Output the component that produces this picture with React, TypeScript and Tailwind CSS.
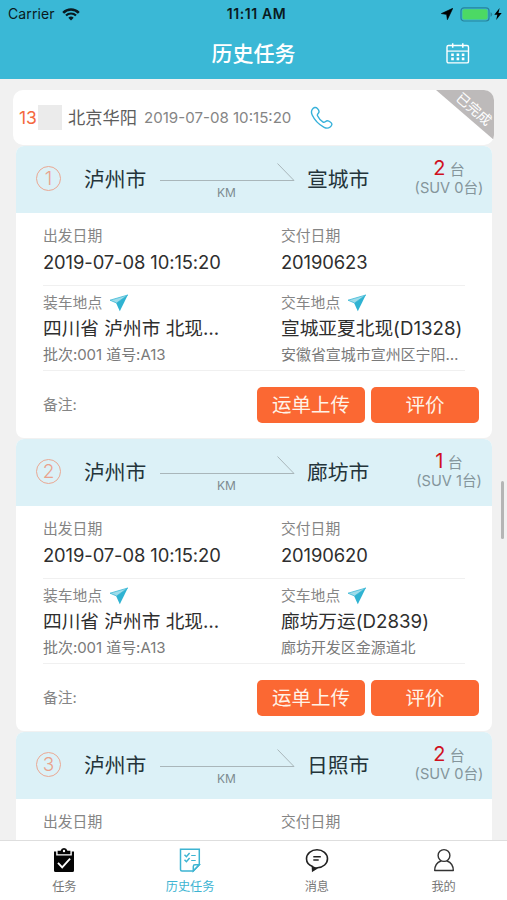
interface Stop {
  index: string;
  from: string;
  to: string;
  count: number;
  suv: number;
  departDate: string;
  deliverDate: string;
  load?: { title: string; detail: string };
  deliver?: { title: string; detail: string };
}

const stops: Stop[] = [
  {
    index: "1",
    from: "泸州市",
    to: "宣城市",
    count: 2,
    suv: 0,
    departDate: "2019-07-08 10:15:20",
    deliverDate: "20190623",
    load: { title: "四川省 泸州市 北现…", detail: "批次:001 道号:A13" },
    deliver: { title: "宣城亚夏北现(D1328)", detail: "安徽省宣城市宣州区宁阳…" },
  },
  {
    index: "2",
    from: "泸州市",
    to: "廊坊市",
    count: 1,
    suv: 1,
    departDate: "2019-07-08 10:15:20",
    deliverDate: "20190620",
    load: { title: "四川省 泸州市 北现…", detail: "批次:001 道号:A13" },
    deliver: { title: "廊坊万运(D2839)", detail: "廊坊开发区金源道北" },
  },
  {
    index: "3",
    from: "泸州市",
    to: "日照市",
    count: 2,
    suv: 0,
    departDate: "",
    deliverDate: "",
  },
];

function StatusBar() {
  return (
    <div className="grid h-[28px] grid-cols-3 items-center pl-2 pr-[5px] text-[#0a1a20]">
      <div className="flex items-center gap-[7px]">
        <span className="text-[14px] leading-[28px] tracking-[0.1px]">Carrier</span>
        <svg width="18" height="13" viewBox="0 0 18 13" fill="none" stroke="currentColor">
          <path d="M1.2 4.8a11 11 0 0 1 15.6 0" strokeWidth="2.6" />
          <path d="M4 7.6a7 7 0 0 1 10 0" strokeWidth="2.2" />
          <path d="M9 12.4 6.3 9.8a3.9 3.9 0 0 1 5.4 0z" fill="currentColor" stroke="none" />
        </svg>
      </div>
      <span className="pl-[3px] text-center text-[14px] font-semibold leading-[28px] tracking-[0.6px]">11:11 AM</span>
      <div className="flex items-center justify-end">
        <svg width="12" height="12" viewBox="0 0 12 12" className="mr-[7px] text-black" fill="currentColor">
          <path d="M11.8.3.3 5.6l5.3.8.8 5.3z" stroke="currentColor" strokeWidth=".6" />
        </svg>
        <svg width="33" height="15" viewBox="0 0 33 15">
          <rect x="1" y=".8" width="28" height="13.2" rx="3" fill="none" stroke="#27839b" strokeWidth="1.2" />
          <rect x="2.4" y="2.2" width="25.2" height="10.4" rx="1.8" fill="#4cd964" />
          <path d="M30.5 5.2a2.4 2.4 0 0 1 0 4.6z" fill="#27839b" />
        </svg>
        <svg width="8" height="12" viewBox="0 0 8 12" className="ml-px text-black" fill="currentColor">
          <path d="M5.6 0 .3 6.7h3L2.2 12l5.5-6.9H4.5z" />
        </svg>
      </div>
    </div>
  );
}

function CalendarIcon() {
  return (
    <svg width="24" height="22" viewBox="0 0 24 22" fill="none" stroke="white">
      <rect x="1" y="2.5" width="21.5" height="17.4" rx="1.5" strokeWidth="1.4" />
      <path d="M1 8.1h21.5" strokeWidth="1.2" />
      <path d="M6.7.3v4.4M16.8.3v4.4" strokeWidth="1.5" />
      <path d="M5.2 11.8h2.6m2.8 0h2.6m2.6 0h2.6M5.2 15.9h2.6m2.8 0h2.6m2.6 0h2.6" strokeWidth="2.6" />
    </svg>
  );
}

function PlaneIcon() {
  return (
    <svg width="20" height="18" viewBox="0 0 20 18">
      <path d="M1 6.2 18.8 1 7.6 9z" fill="#9edcea" stroke="#3bb8d6" strokeWidth=".8" strokeLinejoin="round" />
      <path d="M18.8 1 7.2 9.2l3.6 8z" fill="#2fb3d2" />
    </svg>
  );
}

function Place({ label, title, detail }: { label: string; title: string; detail: string }) {
  return (
    <div>
      <div className="flex h-[28px] items-center gap-[7px] pt-[5px]">
        <span className="text-[14.8px] leading-5 text-[#858585]">{label}</span>
        <PlaneIcon />
      </div>
      <p className="whitespace-nowrap text-[18.7px] leading-[29px] text-[#2e2e2e]">{title}</p>
      <p className="whitespace-nowrap text-[15px] leading-[23px] tracking-[-0.05px] text-[#7a7a7a]">{detail}</p>
    </div>
  );
}

function DateField({ label, value }: { label: string; value: string }) {
  return (
    <div className="pt-[13px]">
      <p className="text-[14.8px] leading-5 text-[#858585]">{label}</p>
      <p className="mt-[2px] whitespace-nowrap text-[18.4px] leading-7 tracking-[-0.1px] text-[#2e2e2e]">{value}</p>
    </div>
  );
}

function StopCard({ stop }: { stop: Stop }) {
  return (
    <section className="mb-px h-[292px] shrink-0 overflow-hidden rounded-lg bg-white">
      <div className="flex h-[67px] bg-[#dcf1f7]">
        <div className="mt-[20px] ml-5 flex size-[25px] items-center justify-center rounded-full border border-[#eaa893] text-[19px] font-light leading-none text-[#e9a28c]">
          {stop.index}
        </div>
        <span className="ml-[23px] w-[76px] text-[20.8px] leading-[67px] text-[#24343a]">{stop.from}</span>
        <div className="mt-[17px] w-[136px]">
          <svg width="136" height="19" viewBox="0 0 136 19" fill="none" stroke="#a9b6ba">
            <path d="M0 17.5h134L117.5.5" />
          </svg>
          <p className="pr-[3px] text-center text-[12px] leading-[22px] text-[#7d8b90]">KM</p>
        </div>
        <span className="ml-[11px] text-[20.8px] leading-[67px] text-[#24343a]">{stop.to}</span>
        <div className="mt-[9px] ml-auto flex w-[86px] flex-col items-center whitespace-nowrap text-[#84959b]">
          <p className="h-[23px] text-[15px] leading-[26px]">
            <span className="text-[20px] text-[#d0111f]">{stop.count}</span> 台
          </p>
          <p className="text-[14.6px] leading-5">(SUV {stop.suv}台)</p>
        </div>
      </div>

      <div className="mx-[27px]">
        <div className="grid h-[73px] grid-cols-[238px_1fr] border-b border-[#f0f0f0]">
          <DateField label="出发日期" value={stop.departDate} />
          <DateField label="交付日期" value={stop.deliverDate} />
        </div>
        {stop.load && stop.deliver && (
          <div className="grid h-[85px] grid-cols-[238px_1fr] border-b border-[#f0f0f0]">
            <Place label="装车地点" {...stop.load} />
            <Place label="交车地点" {...stop.deliver} />
          </div>
        )}
      </div>

      {stop.load && (
        <div className="flex items-center gap-[6px] pt-4 pl-[27px] pr-[13px]">
          <span className="flex-1 pt-px text-[14.8px] leading-[35px] text-[#858585]">备注:</span>
          <button className="h-9 w-[108px] rounded-[5px] bg-[#fb6833] text-[19.5px] leading-9 text-[#fff3e8]">运单上传</button>
          <button className="h-9 w-[108px] rounded-[5px] bg-[#fb6833] text-[19.5px] leading-9 text-[#fff3e8]">评价</button>
        </div>
      )}
    </section>
  );
}

function OrderHeader() {
  return (
    <div className="relative mx-[13px] mt-[11px] flex h-[55px] shrink-0 items-center overflow-hidden rounded-[10px] bg-white pl-[6px]">
      <span className="w-[19px] text-[17.5px] leading-6 text-[#f4693f]">13</span>
      <span className="h-[25px] w-[24px] bg-[#ebebeb]" />
      <span className="ml-[6px] w-[76px] whitespace-nowrap text-[17.3px] leading-6 text-[#5d5d5d]">北京华阳</span>
      <span className="w-[148px] whitespace-nowrap text-[15.1px] leading-6 text-[#858585]">2019-07-08 10:15:20</span>
      <svg width="24" height="24" viewBox="0 0 24 24" className="ml-[18px]" fill="none" stroke="#37b1da" strokeWidth="1.4" strokeLinejoin="round">
        <path d="M2.3 3.3C3.6 1.4 5.8.8 7.2 2.2c1.9 1.8 2.4 3.5 1.1 5-.9 1-1.3 1.5-.8 2.6 1.2 2.6 3.2 4.8 5.6 6.3.9.6 1.6.1 2.5-.7 1.4-1.2 3.1-.7 5 .8 1.9 1.4 1.6 3.2-.4 4.8-1.6 1.3-3.7 1.6-6.1.3C8.8 18.5 4.6 14.2 2.2 9 1.2 6.8 1.2 4.9 2.3 3.3z" />
      </svg>
      <div className="absolute top-0 right-0 h-[50px] w-[58px] bg-[#bdbaba] [clip-path:polygon(0_0,100%_0,100%_100%)]">
        <span className="absolute top-[9px] left-[17px] w-[42px] rotate-[41deg] text-center text-[13.8px] leading-5 text-white">
          已完成
        </span>
      </div>
    </div>
  );
}

function TabBar() {
  return (
    <nav className="grid h-[60px] shrink-0 grid-cols-4 border-t border-[#dedede] bg-white text-[12.2px] text-[#777]">
      <div className="flex flex-col items-center pt-[6px] pl-[2px]">
        <svg width="22" height="26" viewBox="0 0 22 26">
          <path d="M1 4.6h2.2v4h15.6v-4H21v18.9q0 1.5-1.5 1.5h-17Q1 25 1 23.5z" fill="#050505" />
          <path d="M4.6 7.3V3.7h3a3.5 3.5 0 0 1 6.8 0h3v3.6z" fill="#050505" />
          <circle cx="11" cy="4" r="1.2" fill="#fff" />
          <path d="m5 15.8 4.2 4.6 7.9-8.7" fill="none" stroke="#fff" strokeWidth="1.9" />
        </svg>
        <span className="mt-[5px] leading-[18px]">任务</span>
      </div>
      <div className="flex flex-col items-center pt-[6px] text-[#3db4d2]">
        <svg width="22" height="26" viewBox="0 0 22 26" fill="none" stroke="currentColor" strokeWidth="1.5">
          <path d="M1.5 2.3h18.8v15.5l-6 6.2H3q-1.5 0-1.5-1.5z" />
          <path d="M14.3 24v-4.5q0-1.7 1.7-1.7h4.3z" />
          <path d="m5.5 7.8 1.9 1.9 3.2-3.7M5.5 12.8l1.9 1.9 3.2-3.7" />
          <path d="M12.2 8.5h4.5M12.2 13.5h4.5" strokeWidth="1.2" />
        </svg>
        <span className="mt-[5px] leading-[18px]">历史任务</span>
      </div>
      <div className="flex flex-col items-center pt-[6px]">
        <svg width="24" height="26" viewBox="0 0 24 26" fill="none" stroke="#222" strokeWidth="1.6">
          <path d="M7.6 19.5C3.8 18.1 1.5 15.2 1.5 11.8 1.5 6.7 6.2 2.8 12 2.8s10.5 3.9 10.5 9c0 4.9-4.4 8.6-10 9l-4.7 2.7z" strokeLinejoin="round" />
          <path d="m7.6 20 .1 3.6 3-2.6z" fill="#222" />
          <path d="M8.3 9.8h7.5M8.3 13h5.4" strokeWidth="1.5" />
        </svg>
        <span className="mt-[5px] leading-[18px]">消息</span>
      </div>
      <div className="flex flex-col items-center pt-[6px]">
        <svg width="22" height="26" viewBox="0 0 22 26" fill="none" stroke="#333" strokeWidth="1.4">
          <circle cx="11" cy="8.5" r="5.9" />
          <path d="M8 14C4 15.5 1.7 18.8 1.7 23.5h18.6c0-4.7-2.3-8-6.3-9.5" strokeLinejoin="round" />
        </svg>
        <span className="mt-[5px] leading-[18px]">我的</span>
      </div>
    </nav>
  );
}

export default function App() {
  return (
    <div className="relative flex h-[900px] w-[507px] flex-col overflow-hidden bg-[#f1f1f1] font-['Inter','Noto_Sans_CJK_SC',sans-serif]">
      <header className="h-[79px] shrink-0 bg-[#3ab8d6]">
        <StatusBar />
        <div className="grid h-[51px] grid-cols-[1fr_auto_1fr] items-center pr-[37px]">
          <span />
          <h1 className="pl-[37px] text-[21px] font-medium leading-[50px] text-white">历史任务</h1>
          <span className="flex justify-end">
            <CalendarIcon />
          </span>
        </div>
      </header>

      <main className="flex min-h-0 flex-1 flex-col overflow-hidden">
        <OrderHeader />
        <div className="mx-4 mt-px w-[476px]">
          {stops.map((stop) => (
            <StopCard key={stop.index} stop={stop} />
          ))}
        </div>
      </main>

      <TabBar />

      {/* Scroll indicator */}
      <div className="absolute top-[481px] right-[3px] h-[58px] w-[3px] rounded-full bg-[#b5b5b5]" />
    </div>
  );
}
